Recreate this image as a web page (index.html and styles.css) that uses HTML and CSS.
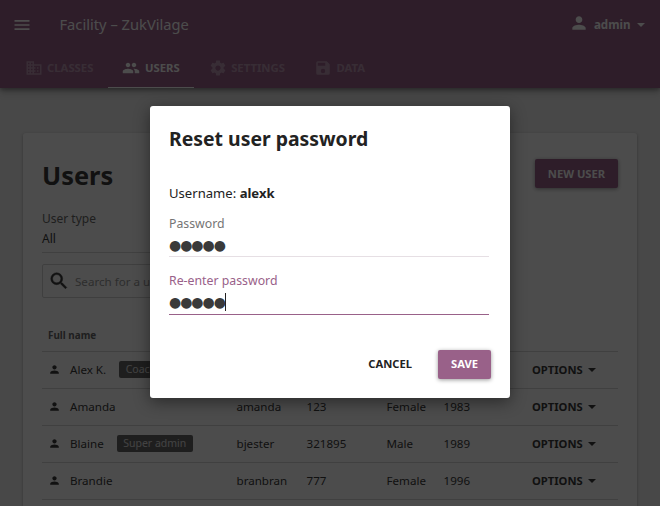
FILE: index.html
```
<!DOCTYPE html>
<html lang="en">
<head>
<meta charset="utf-8">
<title>Facility – ZukVilage</title>
<link rel="stylesheet" href="styles.css">
</head>
<body>
<header class="appbar">
  <div class="toolbar">
    <svg class="menu" viewBox="0 0 24 24"><path d="M3 18h18v-2H3v2zm0-5h18v-2H3v2zm0-7v2h18V6H3z"/></svg>
    <span class="site">Facility – ZukVilage</span>
    <div class="account">
      <svg class="person" viewBox="0 0 24 24"><path d="M12 12c2.21 0 4-1.79 4-4s-1.79-4-4-4-4 1.790-4 4 1.790 4 4 4zm0 2c-2.670 0-8 1.340-8 4v2h16v-2c0-2.660-5.330-4-8-4z"/></svg>
      <span>admin</span>
      <svg class="caret-down" viewBox="0 0 8 4"><path d="M0 0h8L4 4z"/></svg>
    </div>
  </div>
  <nav class="tabs">
    <a class="tab classes"><svg viewBox="0 0 24 24"><path d="M12 7V3H2v18h20V7H12zM6 19H4v-2h2v2zm0-4H4v-2h2v2zm0-4H4V9h2v2zm0-4H4V5h2v2zm4 12H8v-2h2v2zm0-4H8v-2h2v2zm0-4H8V9h2v2zm0-4H8V5h2v2zm10 12h-8v-2h2v-2h-2v-2h2v-2h-2V9h8v10zm-2-8h-2v2h2v-2zm0 4h-2v2h2v-2z"/></svg><span>CLASSES</span></a>
    <a class="tab users active"><svg viewBox="0 0 24 24"><path d="M16 11c1.660 0 2.990-1.340 2.990-3S17.660 5 16 5s-3 1.340-3 3 1.340 3 3 3zm-8 0c1.660 0 2.990-1.340 2.990-3S9.660 5 8 5 5 6.340 5 8s1.340 3 3 3zm0 2c-2.330 0-7 1.170-7 3.500V19h14v-2.500c0-2.330-4.670-3.500-7-3.500zm8 0c-.29 0-.62.020-.97.050 1.160.84 1.970 1.970 1.970 3.450V19h6v-2.500c0-2.330-4.670-3.500-7-3.500z"/></svg><span>USERS</span></a>
    <a class="tab settings"><svg viewBox="0 0 24 24"><path d="M19.430 12.980c.04-.32.07-.64.07-.98s-.03-.66-.07-.98l2.110-1.650c.19-.15.24-.42.12-.64l-2-3.460c-.12-.22-.39-.3-.61-.22l-2.490 1c-.52-.4-1.080-.73-1.690-.98l-.38-2.650C14.460 2.180 14.250 2 14 2h-4c-.25 0-.46.180-.49.420l-.38 2.650c-.61.250-1.170.590-1.690.980l-2.490-1c-.23-.09-.49 0-.61.220l-2 3.460c-.13.220-.07.490.12.640l2.110 1.650c-.04.320-.07.650-.07.980s.03.660.07.980l-2.110 1.650c-.19.150-.24.420-.12.640l2 3.460c.12.220.39.300.61.220l2.490-1c.52.400 1.080.730 1.690.980l.38 2.650c.03.240.24.420.49.420h4c.25 0 .46-.18.49-.42l.38-2.650c.61-.25 1.170-.59 1.690-.98l2.490 1c.23.090.49 0 .61-.22l2-3.460c.12-.22.070-.49-.12-.64l-2.110-1.650zM12 15.500c-1.930 0-3.500-1.570-3.500-3.500s1.570-3.500 3.500-3.500 3.500 1.570 3.500 3.500-1.570 3.500-3.500 3.500z"/></svg><span>SETTINGS</span></a>
    <a class="tab data"><svg viewBox="0 0 24 24"><path d="M17 3H5a2 2 0 0 0-2 2v14a2 2 0 0 0 2 2h14a2 2 0 0 0 2-2V7l-4-4zm-5 16a3 3 0 1 1 0-6 3 3 0 0 1 0 6zm3-10H5V5h10v4z"/></svg><span>DATA</span></a>
  </nav>
</header>

<main class="card">
  <div class="card-head">
    <h1>Users</h1>
    <button class="primary new-user">NEW USER</button>
  </div>
  <div class="filter">
    <div class="filter-label">User type</div>
    <div class="filter-value">All</div>
  </div>
  <div class="search">
    <svg viewBox="0 0 24 24"><path d="M15.500 14h-.79l-.28-.27A6.471 6.471 0 0 0 16 9.500 6.500 6.500 0 1 0 9.500 16c1.610 0 3.090-.59 4.230-1.570l.27.280v.79l5 4.990L20.490 19l-4.990-5zm-6 0C7.010 14 5 11.990 5 9.500S7.010 5 9.500 5 14 7.010 14 9.500 11.990 14 9.500 14z"/></svg>
    <span>Search for a user…</span>
  </div>
  <div class="table">
    <div class="thead">Full name</div>
    <div class="row">
      <svg class="avatar" viewBox="0 0 24 24"><path d="M12 12c2.210 0 4-1.790 4-4s-1.790-4-4-4-4 1.790-4 4 1.790 4 4 4zm0 2c-2.670 0-8 1.340-8 4v2h16v-2c0-2.660-5.330-4-8-4z"/></svg>
      <div class="name"><span>Alex K.</span><span class="badge">Coach</span></div>
      <span>alexk</span><span></span><span></span><span></span>
      <span class="options">OPTIONS<svg viewBox="0 0 8 4"><path d="M0 0h8L4 4z"/></svg></span>
    </div>
    <div class="row">
      <svg class="avatar" viewBox="0 0 24 24"><path d="M12 12c2.210 0 4-1.790 4-4s-1.790-4-4-4-4 1.790-4 4 1.790 4 4 4zm0 2c-2.670 0-8 1.340-8 4v2h16v-2c0-2.660-5.330-4-8-4z"/></svg>
      <div class="name"><span>Amanda</span></div>
      <span>amanda</span><span>123</span><span>Female</span><span>1983</span>
      <span class="options">OPTIONS<svg viewBox="0 0 8 4"><path d="M0 0h8L4 4z"/></svg></span>
    </div>
    <div class="row">
      <svg class="avatar" viewBox="0 0 24 24"><path d="M12 12c2.210 0 4-1.790 4-4s-1.790-4-4-4-4 1.790-4 4 1.790 4 4 4zm0 2c-2.670 0-8 1.340-8 4v2h16v-2c0-2.660-5.330-4-8-4z"/></svg>
      <div class="name"><span>Blaine</span><span class="badge">Super admin</span></div>
      <span>bjester</span><span>321895</span><span>Male</span><span>1989</span>
      <span class="options">OPTIONS<svg viewBox="0 0 8 4"><path d="M0 0h8L4 4z"/></svg></span>
    </div>
    <div class="row">
      <svg class="avatar" viewBox="0 0 24 24"><path d="M12 12c2.210 0 4-1.790 4-4s-1.790-4-4-4-4 1.790-4 4 1.790 4 4 4zm0 2c-2.670 0-8 1.340-8 4v2h16v-2c0-2.660-5.330-4-8-4z"/></svg>
      <div class="name"><span>Brandie</span></div>
      <span>branbran</span><span>777</span><span>Female</span><span>1996</span>
      <span class="options">OPTIONS<svg viewBox="0 0 8 4"><path d="M0 0h8L4 4z"/></svg></span>
    </div>
  </div>
</main>

<div class="backdrop">
  <section class="modal">
    <h2>Reset user password</h2>
    <p class="username">Username: <b>alexk</b></p>
    <div class="field">
      <div class="label">Password</div>
      <div class="value"><span class="dots">●●●●●</span></div>
    </div>
    <div class="field focused">
      <div class="label">Re-enter password</div>
      <div class="value"><span class="dots">●●●●●</span><span class="cursor"></span></div>
    </div>
    <div class="actions">
      <button class="flat">CANCEL</button>
      <button class="primary save">SAVE</button>
    </div>
  </section>
</div>
</body>
</html>
```
FILE: styles.css
```
* { box-sizing: border-box; }
html, body { margin: 0; height: 506px; overflow: hidden; }
body {
  background: #f0f0f0;
  color: #3a3a3a;
  font-family: "Noto Sans", sans-serif;
  font-size: 11.6px;
}
svg { display: block; fill: currentColor; flex: none; }
button { font: inherit; font-size: 11.2px; border: 0; padding: 0; font-weight: 700; }

.appbar {
  height: 88px;
  background: #996189;
  color: #fff;
  box-shadow: 0 2px 4px rgba(0,0,0,.3), 0 4px 8px rgba(0,0,0,.2);
}
.toolbar { height: 48px; display: flex; align-items: center; padding: 0 15.5px 0 11.5px; }
.menu { width: 20px; height: 20px; margin-top: 1px; }
.site { margin-left: 28px; font-size: 14.7px; }
.account { margin-left: auto; display: flex; align-items: center; font-size: 11.6px; font-weight: 700; }
.person { width: 20px; height: 20px; margin: -3px 5px 0 0; }
.caret-down { width: 8px; height: 4px; margin: 2px 0 0 6px; }
.tabs { display: flex; height: 40px; padding-left: 10px; }
.tab { display: flex; align-items: center; gap: 4.5px; padding: 2px 14.5px 3px; font-size: 11.3px; font-weight: 700; opacity: .35; }
.tab svg { width: 18px; height: 18px; }
.active { opacity: 1; border-bottom: 1px solid #fff; padding-bottom: 2px; }

.card {
  margin: 45px 23px 0;
  height: 373px;
  padding: 26px 19px 0;
  background: #fff;
  border-radius: 3px 3px 0 0;
  box-shadow: 0 1px 3px rgba(0,0,0,.3);
}
.card-head { display: flex; justify-content: space-between; height: 51px; }
h1 { margin: 0; font-size: 25.4px; line-height: 33px; }
.primary { background: #996189; color: #fff; border-radius: 2px; box-shadow: 0 1px 4px rgba(0,0,0,.4); }
.new-user { width: 83px; height: 29px; padding-bottom: 1px; }
.filter { width: 300px; height: 43px; font-size: 12px; border-bottom: 1px solid #d8d8d8; }
.filter-label { line-height: 18px; color: #686868; }
.filter-value { line-height: 22px; }
.search {
  margin-top: 11px;
  width: 300px;
  height: 34px;
  border: 1px solid #d4d4d4;
  border-radius: 2px;
  display: flex;
  align-items: center;
  padding-left: 5px;
  color: #999;
}
.search svg { width: 22px; height: 22px; color: #3a3a3a; margin-right: 5px; stroke: currentColor; stroke-width: .5; }
.thead { height: 54px; padding: 28px 6px 0; font-size: 9.9px; font-weight: 700; line-height: 19px; color: #686868; border-bottom: 1px solid #d8d8d8; }
.row {
  display: grid;
  grid-template-columns: 22px 166.500px 70px 80px 57px 88.500px 1fr;
  align-items: center;
  height: 37px;
  padding: 0 0 2px 6px;
  border-bottom: 1px solid #d8d8d8;
}
.avatar { width: 13px; height: 13px; }
.name { display: flex; align-items: center; gap: 13px; }
.badge { background: #666; color: #e0e0e0; border-radius: 2px; height: 17px; line-height: 17px; padding: 0 6.5px; font-size: 10.5px; }
.options { display: flex; align-items: center; gap: 5.5px; font-size: 11.2px; font-weight: 700; }
.options svg { width: 8px; height: 4px; margin-top: 2px; }

.backdrop {
  position: absolute;
  inset: 0;
  background: rgba(0,0,0,.7);
  display: flex;
  justify-content: center;
  padding-top: 106px;
}
.modal {
  width: 360px;
  height: 292px;
  padding: 19px 19px;
  background: #fff;
  border-radius: 3px;
  box-shadow: 0 4px 16px rgba(0,0,0,.45);
}
h2 { margin: 0; font-size: 19.4px; line-height: 28px; color: #222; }
.username { margin: 31px 0 11px; font-size: 13.1px; line-height: 18px; color: #222; }
.field { width: 320px; height: 44px; border-bottom: 1px solid #e6dfe4; }
.label { font-size: 12.3px; line-height: 21px; color: #757575; }
.value { display: flex; align-items: center; height: 22px; }
.dots { font-family: "DejaVu Sans", sans-serif; font-size: 14px; letter-spacing: -1.050px; line-height: 20px; color: #3a3a3a; }
.cursor { width: 1px; height: 18px; background: #222; }
.focused { margin-top: 14px; border-color: #996189; }
.focused .label { color: #996189; line-height: 19px; }
.focused .value { height: 23px; }
.actions { display: flex; justify-content: flex-end; align-items: center; margin-top: 35px; gap: 26px; }
.flat { background: none; color: #222; padding-bottom: 2px; }
.save { width: 53px; height: 29px; padding-bottom: 2px; }
```
